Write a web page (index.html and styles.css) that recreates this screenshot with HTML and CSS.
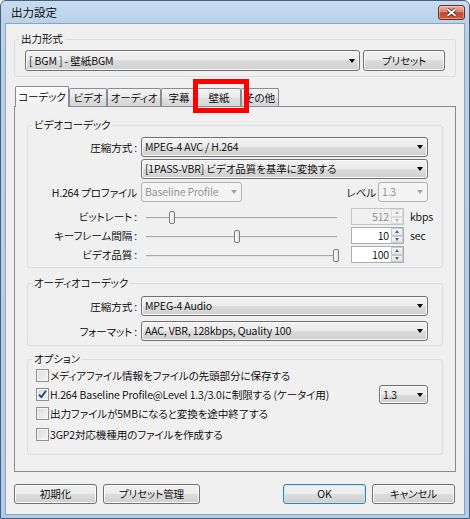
FILE: index.html
```html
<!DOCTYPE html>
<html lang="ja">
<head>
<meta charset="utf-8">
<title>出力設定</title>
<link rel="stylesheet" href="styles.css">
</head>
<body>
<div class="window">
  <div class="titlebar">
    <span class="title">出力設定</span>
    <div class="close">
      <svg width="11" height="9" viewBox="0 0 11 9"><path d="M1.5 1.2 L9.5 7.8 M9.5 1.2 L1.5 7.8" stroke="#4a1a12" stroke-width="3.4" fill="none"/><path d="M1.5 1.2 L9.5 7.8 M9.5 1.2 L1.5 7.8" stroke="#fff" stroke-width="1.8" fill="none"/></svg>
    </div>
  </div>
  <div class="client">
    <fieldset class="group g-format">
      <legend>出力形式</legend>
      <div class="format-row">
        <div class="combo c-format"><span>[ BGM ] - 壁紙BGM</span></div>
        <div class="btn b-preset">プリセット</div>
      </div>
    </fieldset>

    <div class="tabs">
      <div class="tab sel t-codec">コーデック</div>
      <div class="tab t-video">ビデオ</div>
      <div class="tab t-audio">オーディオ</div>
      <div class="tab t-sub">字幕</div>
      <div class="tab t-wall">壁紙<span class="mark"></span></div>
      <div class="tab t-other">その他</div>
    </div>

    <div class="panel">
      <fieldset class="group g-video">
        <legend>ビデオコーデック</legend>
        <div class="vbody">
          <div class="frow r-combo">
            <span class="lbl">圧縮方式 :</span>
            <div class="combo c-main"><span>MPEG-4 AVC / H.264</span></div>
          </div>
          <div class="frow r-combo r2">
            <span class="lbl"></span>
            <div class="combo c-main"><span>[1PASS-VBR] ビデオ品質を基準に変換する</span></div>
          </div>
          <div class="frow r-combo r3">
            <span class="lbl">H.264 プロファイル</span>
            <div class="combo dis c-profile"><span>Baseline Profile</span></div>
            <span class="lvl-lbl">レベル</span>
            <div class="combo dis c-level"><span>1.3</span></div>
          </div>
          <div class="frow r-slider s1">
            <span class="lbl">ビットレート :</span>
            <div class="slider"><div class="track"></div><div class="thumb" style="left:31px"></div></div>
            <div class="spin dis"><span class="val">512</span><span class="arrows"><i class="up"></i><i class="dn"></i></span></div>
            <span class="unit">kbps</span>
          </div>
          <div class="frow r-slider">
            <span class="lbl">キーフレーム間隔 :</span>
            <div class="slider"><div class="track"></div><div class="thumb" style="left:96px"></div></div>
            <div class="spin"><span class="val">10</span><span class="arrows"><i class="up"></i><i class="dn"></i></span></div>
            <span class="unit">sec</span>
          </div>
          <div class="frow r-slider">
            <span class="lbl">ビデオ品質 :</span>
            <div class="slider"><div class="track"></div><div class="thumb" style="left:195px"></div></div>
            <div class="spin"><span class="val">100</span><span class="arrows"><i class="up"></i><i class="dn"></i></span></div>
          </div>
        </div>
      </fieldset>

      <fieldset class="group g-audio">
        <legend>オーディオコーデック</legend>
        <div class="abody">
          <div class="frow r-combo">
            <span class="lbl">圧縮方式 :</span>
            <div class="combo c-main"><span>MPEG-4 Audio</span></div>
          </div>
          <div class="frow r-combo ra2">
            <span class="lbl">フォーマット :</span>
            <div class="combo c-main"><span>AAC, VBR, 128kbps, Quality 100</span></div>
          </div>
        </div>
      </fieldset>

      <fieldset class="group g-opt">
        <legend>オプション</legend>
        <div class="obody">
          <div class="orow">
            <span class="check"></span><span class="otext">メディアファイル情報をファイルの先頭部分に保存する</span>
          </div>
          <div class="orow">
            <span class="check on"><svg width="11" height="11" viewBox="0 0 11 11"><path d="M2 5.6 L4.4 8.2 L9 1.8" stroke="#2b3f86" stroke-width="1.9" fill="none" stroke-linejoin="round"/></svg></span><span class="otext">H.264 Baseline Profile@Level 1.3/3.0に制限する (ケータイ用)</span>
            <div class="combo c-opt"><span>1.3</span></div>
          </div>
          <div class="orow">
            <span class="check"></span><span class="otext">出力ファイルが5MBになると変換を途中終了する</span>
          </div>
          <div class="orow last">
            <span class="check"></span><span class="otext">3GP2対応機種用のファイルを作成する</span>
          </div>
        </div>
      </fieldset>
    </div>

    <div class="buttons">
      <div class="btn b-init">初期化</div>
      <div class="btn b-pm">プリセット管理</div>
      <div class="btn b-ok">OK</div>
      <div class="btn b-cancel">キャンセル</div>
    </div>
  </div>
</div>
</body>
</html>
```

FILE: styles.css
```css
* { box-sizing: border-box; }
html, body { margin: 0; padding: 0; }
body {
  width: 470px;
  height: 519px;
  overflow: hidden;
  background: #ffffff;
  font-family: "Noto Sans CJK JP", "Noto Sans", sans-serif;
  font-size: 10.6px;
  font-weight: 350;
  letter-spacing: -0.15px;
  font-feature-settings: "palt";
  color: #000;
}

.window {
  width: 470px;
  height: 519px;
  border: 1px solid #445f80;
  border-radius: 6px 6px 0 0;
  background: linear-gradient(#c9dcf0, #bad1ea 22px, #b3cbe6 100%);
  padding: 0 4px 3px;
  display: flex;
  flex-direction: column;
}

.titlebar {
  height: 22px;
  display: flex;
  align-items: center;
  justify-content: space-between;
  padding-left: 6px;
}
.title { line-height: 14px; font-size: 11.5px; letter-spacing: 0; }
.close {
  width: 27px;
  height: 15px;
  border: 1px solid #6e2b20;
  border-radius: 3px;
  background: linear-gradient(#eab0a2, #d98571 45%, #c4462e 52%, #d2603f);
  box-shadow: inset 0 0 0 1px rgba(255, 255, 255, 0.35);
  display: flex;
  align-items: center;
  justify-content: center;
}
.close svg { display: block; }

.client {
  flex: 1;
  background: #f0f0f0;
  border: 1px solid #8aa3bf;
  display: flex;
  flex-direction: column;
}

/* group boxes */
.group {
  margin: 0;
  padding: 0;
  min-width: 0;
  border: 1px solid #d5dfe5;
  border-radius: 3px;
}
.group legend {
  margin-left: 4px;
  padding: 0 2px;
  line-height: 14px;
}

.g-format { margin: 8px 8px 0; }
.format-row {
  display: flex;
  gap: 3px;
  padding: 4px 10px 5px;
}
.c-format { width: 335px; height: 21px; }
.b-preset { width: 82px; height: 21px; }

/* combo */
.combo {
  display: flex;
  align-items: center;
  justify-content: space-between;
  border: 1px solid #707070;
  border-radius: 3px;
  background: linear-gradient(#f2f2f2 0%, #ebebeb 50%, #dddddd 50%, #cfcfcf 100%);
  box-shadow: inset 0 0 0 1px #fbfbfb;
  padding: 0 4px 0 3px;
  line-height: 14px;
  white-space: nowrap;
}
.combo::after {
  content: "";
  flex: none;
  border-left: 3.5px solid transparent;
  border-right: 3.5px solid transparent;
  border-top: 4px solid #000;
}
.combo.dis {
  border-color: #adb2b5;
  background: #f4f4f4;
  box-shadow: none;
  color: #8a8a8a;
}
.combo.dis::after { border-top-color: #a3a3a3; }

/* buttons */
.btn {
  display: flex;
  align-items: center;
  justify-content: center;
  border: 1px solid #707070;
  border-radius: 3px;
  background: linear-gradient(#f2f2f2 0%, #ebebeb 50%, #dddddd 50%, #cfcfcf 100%);
  box-shadow: inset 0 0 0 1px #fbfbfb;
  line-height: 14px;
  white-space: nowrap;
}

/* tabs */
.tabs {
  display: flex;
  align-items: flex-end;
  height: 20px;
  margin: 9px 0 0 9px;
}
.tab {
  height: 18px;
  border: 1px solid #898c95;
  border-bottom: none;
  border-radius: 2px 2px 0 0;
  background: linear-gradient(#f4f4f4, #e9e9e9 50%, #dfdfdf 51%, #d6d6d6);
  display: flex;
  align-items: center;
  justify-content: center;
  line-height: 14px;
  white-space: nowrap;
}
.tab.sel {
  position: relative;
  z-index: 1;
  height: 21px;
  margin-bottom: -1px;
  background: linear-gradient(#fdfdfd, #f0f0f0);
}
.t-codec { width: 54px; }
.t-video { width: 38px; }
.t-audio { width: 54px; }
.t-sub { width: 36px; }
.t-wall { width: 44px; position: relative; }
.t-other { width: 38px; }
.mark {
  position: absolute;
  left: -5px;
  top: -10px;
  width: 56px;
  height: 34px;
  border: 5px solid #ff0000;
  z-index: 2;
}

.panel {
  margin: 0 8px;
  height: 366px;
  border: 1px solid #898c95;
  background: #f0f0f0;
  padding: 0 12px;
}

/* rows */
.frow { display: flex; align-items: center; }
.lbl {
  flex: none;
  width: 109px;
  margin-right: 4px;
  text-align: right;
  white-space: nowrap;
}

.g-video { margin-top: 11px; }
.vbody { padding: 5px 14px 4px 0; }
.r-combo { height: 20px; }
.r-combo .combo { height: 20px; }
.c-main { width: 287px; }
.r2 { margin-top: 2px; }
.r3 { margin-top: 3px; }
.c-profile { width: 101px; }
.lvl-lbl { margin-left: auto; margin-right: 2px; }
.c-level { width: 50px; }

.r-slider { height: 17px; margin-top: 2px; }
.r-slider.s1 { margin-top: 6px; }
.slider {
  position: relative;
  flex: none;
  width: 202px;
  height: 17px;
  margin-right: 8px;
}
.track {
  position: absolute;
  left: 5px;
  right: 6px;
  top: 9px;
  height: 2px;
  border-top: 1px solid #a9a9a9;
  border-bottom: 1px solid #e6e6e6;
}
.thumb {
  position: absolute;
  top: 3px;
  width: 6px;
  height: 13px;
  margin-left: -3px;
  border: 1px solid #7a7a7a;
  border-radius: 2px;
  background: linear-gradient(90deg, #ffffff, #e3e3e3);
}
.spin {
  flex: none;
  width: 53px;
  height: 17px;
  display: flex;
  border: 1px solid #abadb3;
  background: #fff;
}
.spin .val {
  flex: 1;
  text-align: right;
  padding-right: 2px;
  line-height: 15px;
}
.arrows {
  width: 12px;
  display: flex;
  flex-direction: column;
}
.arrows i {
  flex: 1;
  display: flex;
  align-items: center;
  justify-content: center;
  border: 1px solid #c9c9c9;
  background: linear-gradient(#f7f7f7, #e4e4e4);
}
.arrows i::after {
  content: "";
  border-left: 2.5px solid transparent;
  border-right: 2.5px solid transparent;
}
.arrows i.up::after { border-bottom: 3px solid #4d6185; }
.arrows i.dn::after { border-top: 3px solid #4d6185; }
.spin.dis { background: #f0f0f0; border-color: #c2c4c8; color: #8a8a8a; }
.spin.dis .arrows i { border-color: #dadada; background: #f2f2f2; }
.spin.dis .arrows i.up::after { border-bottom-color: #b5b5b5; }
.spin.dis .arrows i.dn::after { border-top-color: #b5b5b5; }
.unit { margin-left: 6px; }

.g-audio { margin-top: 8px; }
.abody { padding: 6px 14px 4px 0; }
.ra2 { margin-top: 5px; }

.g-opt { margin-top: 6px; }
.obody { padding: 0 14px 10px 8px; }
.orow {
  height: 19px;
  display: flex;
  align-items: center;
}
.orow.last { margin-top: 2px; }
.check {
  flex: none;
  width: 13px;
  height: 13px;
  border: 1px solid #8e8f8f;
  background: linear-gradient(135deg, #dadada, #f7f7f7);
  box-shadow: inset 0 0 0 1px #f4f4f4;
  margin-right: 1px;
  display: flex;
  align-items: center;
  justify-content: center;
}
.check svg { display: block; }
.otext { white-space: nowrap; }
.c-opt { width: 49px; height: 19px; margin-left: auto; }

/* bottom buttons */
.buttons {
  display: flex;
  margin-top: 12px;
  padding: 0 9px 0 8px;
}
.buttons .btn { height: 20px; }
.b-init { width: 83px; }
.b-pm { width: 97px; margin-left: 6px; }
.b-ok {
  width: 83px;
  margin-left: auto;
  border-color: #3c7fb1;
  box-shadow: inset 0 0 0 1px #bfe6f9;
}
.b-cancel { width: 83px; margin-left: 6px; }
```
